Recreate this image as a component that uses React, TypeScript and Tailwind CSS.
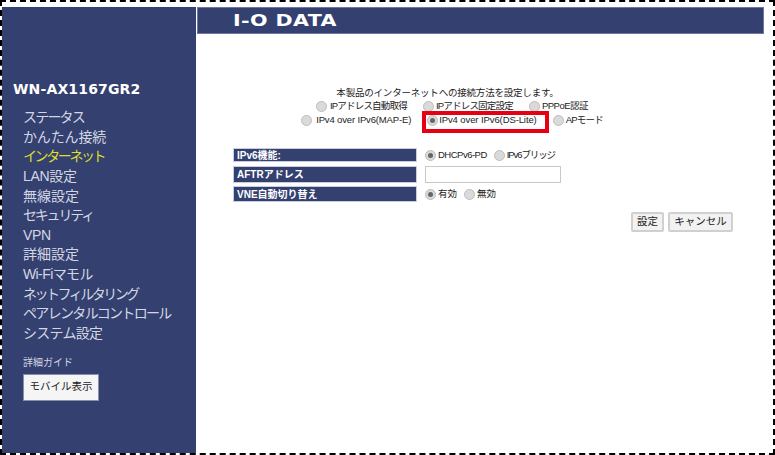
const jp = "font-['Liberation_Sans','Noto_Sans_CJK_JP',sans-serif]";

const navItems = [
  { label: "ステータス", tracking: "tracking-[-1.8px]" },
  { label: "かんたん接続", tracking: "tracking-[-0.15px]" },
  { label: "インターネット", tracking: "tracking-[-2.4px]" },
  { label: "LAN設定", tracking: "tracking-[-0.3px]" },
  { label: "無線設定", tracking: "tracking-[0px]" },
  { label: "セキュリティ", tracking: "tracking-[-2.2px]" },
  { label: "VPN", tracking: "tracking-[-0.3px]" },
  { label: "詳細設定", tracking: "tracking-[0px]" },
  { label: "Wi-Fiマモル", tracking: "tracking-[-0.6px]" },
  { label: "ネットフィルタリング", tracking: "tracking-[-2.5px]" },
  { label: "ペアレンタルコントロール", tracking: "tracking-[-1.67px]" },
  { label: "システム設定", tracking: "tracking-[-0.7px]" },
];

function Radio({ checked = false }: { checked?: boolean }) {
  return (
    <span className="flex h-[11px] w-[11px] shrink-0 items-center justify-center rounded-full border border-[#bdbdbd] bg-[#dadada]">
      {checked && <span className="h-[5px] w-[5px] rounded-full bg-[#666666]" />}
    </span>
  );
}

function Option({ label, checked, className }: { label: string; checked?: boolean; className?: string }) {
  return (
    <span className={`flex items-center text-[9.5px] leading-[12px] whitespace-nowrap ${className ?? "gap-[3px]"}`}>
      <Radio checked={checked} />
      <span>{label}</span>
    </span>
  );
}

function FieldLabel({ children, className }: { children: string; className?: string }) {
  return (
    <div className={`flex w-[184px] items-center bg-[#334070] pl-[4px] text-[10px] font-bold text-white shadow-[0_0_0_1px_#c9cede_inset] ${className ?? ""}`}>
      {children}
    </div>
  );
}

function GrayButton({ children, className }: { children: string; className?: string }) {
  return (
    <button className={`h-[20px] rounded-[2px] border-2 border-[#d0d0d0] bg-[#f2f2f2] text-[10.5px] text-[#222222] ${className ?? ""}`}>
      {children}
    </button>
  );
}

export default function App() {
  return (
    <div className={`flex h-[455px] w-[775px] overflow-hidden border-2 border-dashed border-black bg-white pt-[5px] text-[#222222] ${jp}`}>
      {/* Sidebar */}
      <aside className="flex h-[446px] w-[194px] shrink-0 flex-col bg-[#334070] pt-[73px]">
        <h1 className="pl-[11px] font-['DejaVu_Sans',sans-serif] text-[14px] leading-[18px] font-bold tracking-[0.15px] text-white">WN-AX1167GR2</h1>
        <nav className="mt-[10px] flex flex-col pl-[21px]">
          {navItems.map((item) => (
            <a
              key={item.label}
              className={`h-[19.65px] text-[14px] leading-[19.65px] whitespace-nowrap ${item.tracking} ${item.label === "インターネット" ? "text-[#dede2c]" : "text-[#d4d7e2]"}`}
            >
              {item.label}
            </a>
          ))}
        </nav>
        <p className="mt-[12px] pl-[21px] text-[10px] leading-[14px] text-[#d4d7e2]">詳細ガイド</p>
        <button className="mt-[4px] ml-[21px] h-[27px] w-[76px] border border-[#8a90a8] bg-[#f5f5f5] text-[10.5px] text-[#222222]">
          モバイル表示
        </button>
      </aside>

      {/* Main */}
      <main className="ml-[1px] flex w-[567px] flex-col">
        <header className="flex h-[27px] items-center bg-[#334070] pt-[1px] pl-[36px] shadow-[0_0_0_1px_#6d77a0_inset]">
          <span className="origin-left scale-x-[1.25] font-['DejaVu_Sans',sans-serif] text-[16.5px] leading-none font-bold tracking-[0.3px] text-white">I-O DATA</span>
        </header>

        <section className="relative flex w-[510px] flex-col items-center pt-[52px] text-[9.5px]">
          <p className="pr-[9px] leading-[13px] tracking-[-0.2px]">本製品のインターネットへの接続方法を設定します。</p>
          <div className="mt-[1px] flex gap-[16px]">
            <Option label="IPアドレス自動取得" className="gap-[3px] tracking-[-0.8px]" />
            <Option label="IPアドレス固定設定" className="gap-[2px] tracking-[-0.8px]" />
            <Option label="PPPoE認証" className="gap-[2px] tracking-[-0.5px]" />
          </div>
          <div className="mt-[2px] flex gap-[16px]">
            <Option label="IPv4 over IPv6(MAP-E)" className="gap-[4px] tracking-[-0.15px]" />
            <span className="relative">
              <Option label="IPv4 over IPv6(DS-Lite)" checked className="gap-[1px] tracking-[-0.1px]" />
              <span className="absolute top-[-3px] right-[-12px] bottom-[-7px] left-[-5px] border-[4px] border-[#e60012]" />
            </span>
            <Option label="APモード" className="gap-[2px] tracking-[-0.8px]" />
          </div>
        </section>

        <section className="mt-[22px] flex flex-col pl-[36px]">
          <div className="flex h-[14px] gap-[8px]">
            <FieldLabel>IPv6機能:</FieldLabel>
            <div className="flex items-center gap-[7px]">
              <Option label="DHCPv6-PD" checked className="gap-[2px] tracking-[-0.5px]" />
              <Option label="IPv6ブリッジ" className="gap-[2px] tracking-[-1.1px]" />
            </div>
          </div>
          <div className="mt-[4px] flex h-[17px] gap-[8px]">
            <FieldLabel>AFTRアドレス</FieldLabel>
            <input className="h-[17px] w-[136px] border border-[#c8c8c8] bg-white" />
          </div>
          <div className="mt-[3px] flex h-[16px] gap-[8px]">
            <FieldLabel>VNE自動切り替え</FieldLabel>
            <div className="flex items-center gap-[7px]">
              <Option label="有効" checked className="gap-[2px]" />
              <Option label="無効" className="gap-[2px]" />
            </div>
          </div>
        </section>

        <div className="mt-[10px] flex gap-[4px] pl-[434px]">
          <GrayButton className="w-[33px]">設定</GrayButton>
          <GrayButton className="w-[65px]">キャンセル</GrayButton>
        </div>
      </main>
    </div>
  );
}
